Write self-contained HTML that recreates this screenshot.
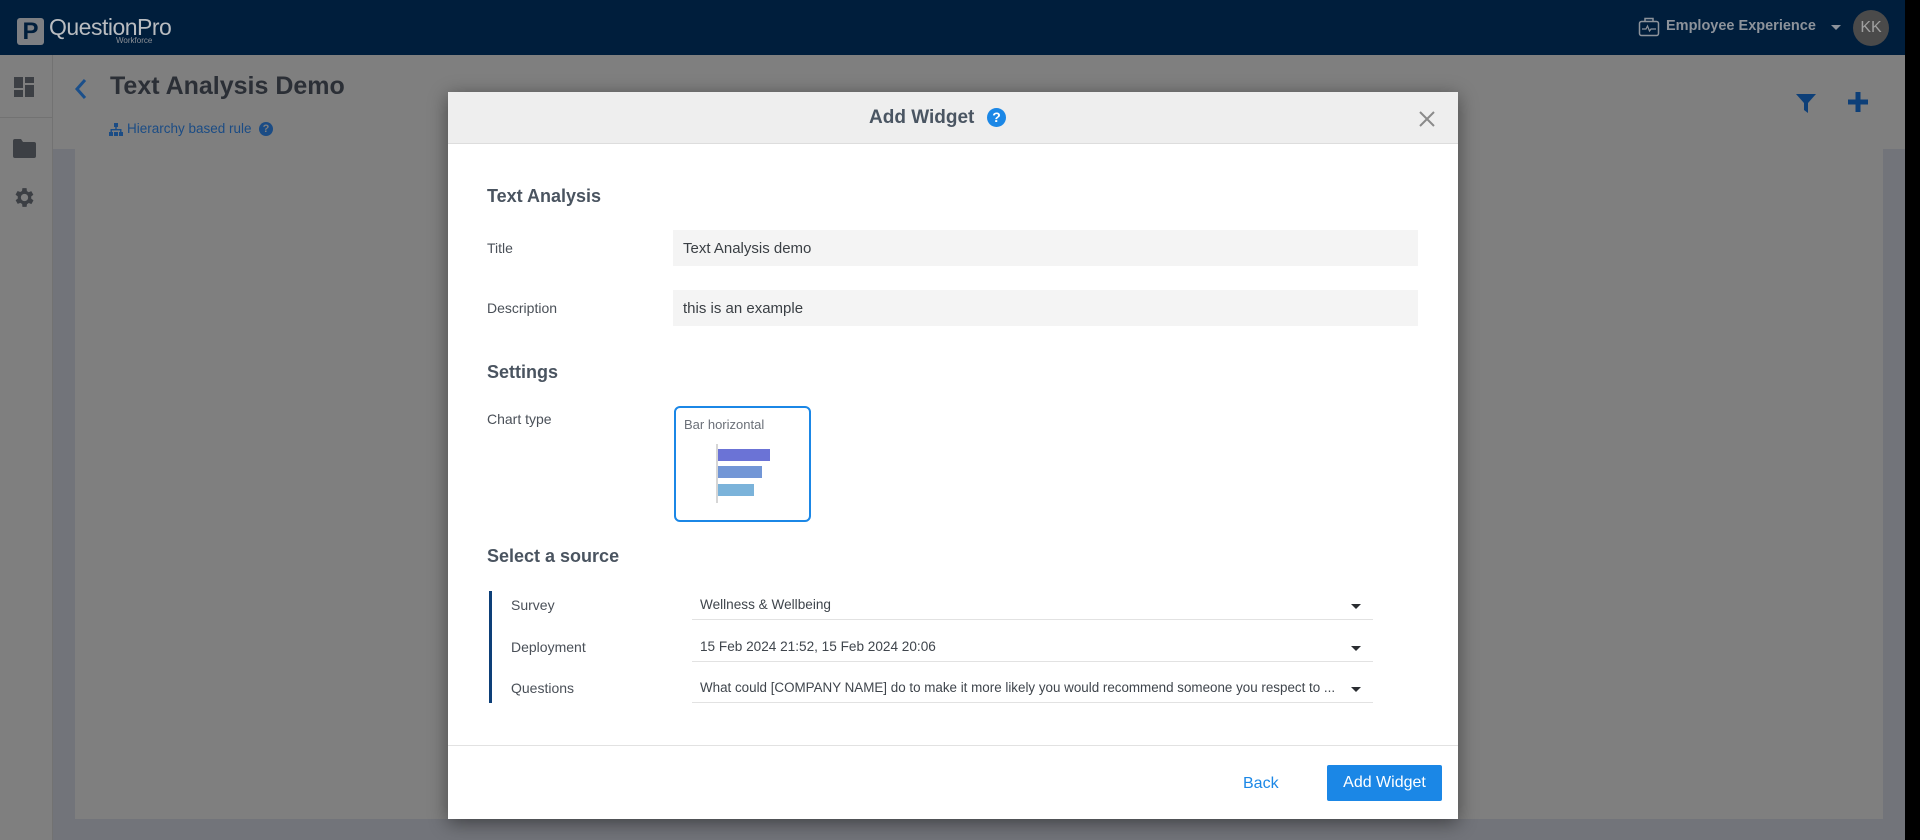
<!DOCTYPE html>
<html><head><meta charset="utf-8"><style>
*{box-sizing:border-box;margin:0;padding:0}
body{width:1920px;height:840px;overflow:hidden;background:#000;font-family:"Liberation Sans",sans-serif;position:relative}
.abs{position:absolute}
</style></head><body>
<div class="abs" style="left:0;top:0;width:1905px;height:840px;background:#7f7f7f"></div>
<!-- header -->
<div class="abs" style="left:0;top:0;width:1905px;height:55px;background:#001e3c"></div>
<div class="abs" style="left:17px;top:18px;width:27px;height:27px;background:#7d7f83;border-radius:3px;color:#001e3c;font-weight:bold;font-size:24px;line-height:27px;text-align:center">P</div>
<div class="abs" style="left:49px;top:14px;font-size:23px;color:#b9bcc0;letter-spacing:-0.5px">QuestionPro</div>
<div class="abs" style="left:116px;top:36px;font-size:8px;color:#8c9096">Workforce</div>
<svg class="abs" style="left:1638px;top:16px" width="22" height="22" viewBox="0 0 22 22"><rect x="1.5" y="5.5" width="19" height="14" rx="2" fill="none" stroke="#8d939b" stroke-width="1.5"/><path d="M7 5.5V2.5h8v3" fill="none" stroke="#8d939b" stroke-width="1.5"/><path d="M4 13h4l1.5-3 2 5 1.5-2h5" fill="none" stroke="#8d939b" stroke-width="1.2"/></svg>
<div class="abs" style="left:1666px;top:18px;font-size:14.5px;font-weight:bold;color:#8d939b">Employee Experience</div>
<div class="abs" style="left:1831px;top:25px;border-left:5px solid transparent;border-right:5px solid transparent;border-top:5px solid #8d939b"></div>
<div class="abs" style="left:1853px;top:10px;width:36px;height:36px;border-radius:50%;background:#4a4a4a;color:#a0a0a0;font-size:16px;line-height:36px;text-align:center">KK</div>
<!-- sidebar -->
<div class="abs" style="left:52px;top:55px;width:1px;height:785px;background:#727272"></div>
<div class="abs" style="left:0;top:117px;width:52px;height:1px;background:#727272"></div>
<svg class="abs" style="left:14px;top:77px" width="21" height="21" viewBox="0 0 21 21" fill="#3c3f44"><rect x="0" y="0" width="9" height="11"/><rect x="11" y="0" width="9" height="6"/><rect x="0" y="13" width="9" height="7"/><rect x="11" y="8" width="9" height="12"/></svg>
<svg class="abs" style="left:13px;top:139px" width="23" height="19" viewBox="0 0 23 19" fill="#3c3f44"><path d="M0 2a2 2 0 0 1 2-2h6l2 3h11a2 2 0 0 1 2 2v12a2 2 0 0 1-2 2H2a2 2 0 0 1-2-2z"/></svg>
<svg class="abs" style="left:12px;top:185px" width="25" height="25" viewBox="0 0 24 24" fill="#3c3f44"><path d="M19.4 13a7.5 7.5 0 0 0 0-2l2.1-1.6-2-3.5-2.5 1a7 7 0 0 0-1.7-1L15 3h-4l-.4 2.7a7 7 0 0 0-1.7 1l-2.5-1-2 3.5L6.6 11a7.5 7.5 0 0 0 0 2l-2.1 1.6 2 3.5 2.5-1a7 7 0 0 0 1.7 1L11 21h4l.4-2.7a7 7 0 0 0 1.7-1l2.5 1 2-3.5zM13 15.5a3.5 3.5 0 1 1 0-7 3.5 3.5 0 0 1 0 7z" transform="translate(-1 0)"/></svg>
<!-- main -->
<div class="abs" style="left:53px;top:149px;width:1852px;height:691px;background:#72747a"></div>
<div class="abs" style="left:75px;top:149px;width:1808px;height:670px;background:#7f7f7f"></div>
<svg class="abs" style="left:74px;top:78px" width="14" height="22" viewBox="0 0 14 22"><path d="M11 2L3 11l8 9" fill="none" stroke="#1b4f8a" stroke-width="3"/></svg>
<div class="abs" style="left:110px;top:72px;font-size:25px;font-weight:bold;color:#2b2f36">Text Analysis Demo</div>
<svg class="abs" style="left:109px;top:123px" width="14" height="13" viewBox="0 0 14 13" fill="#1b4c85"><rect x="5" y="0" width="4" height="4"/><rect x="6.3" y="4" width="1.4" height="3"/><rect x="1.5" y="6" width="11" height="1.4"/><rect x="1.5" y="6" width="1.4" height="3"/><rect x="11.1" y="6" width="1.4" height="3"/><rect x="0" y="9" width="4" height="4"/><rect x="5" y="9" width="4" height="4"/><rect x="10" y="9" width="4" height="4"/></svg>
<div class="abs" style="left:127px;top:121px;font-size:13.5px;color:#1b4c85">Hierarchy based rule</div>
<div class="abs" style="left:259px;top:122px;width:14px;height:14px;border-radius:50%;background:#1b4c85;color:#7f7f7f;font-size:11px;font-weight:bold;text-align:center;line-height:14px">?</div>
<svg class="abs" style="left:1796px;top:93px" width="20" height="20" viewBox="0 0 20 20"><path d="M0 1h20l-8 9v10l-4-3V10z" fill="#0d3f78"/></svg>
<svg class="abs" style="left:1848px;top:92px" width="20" height="20" viewBox="0 0 20 20"><path d="M7.5 0h5v7.5H20v5h-7.5V20h-5v-7.5H0v-5h7.5z" fill="#0d3f78"/></svg>
<!-- modal -->
<div class="abs" style="left:448px;top:92px;width:1010px;height:727px;background:#fff;box-shadow:0 4px 18px rgba(0,0,0,0.45)">
 <div class="abs" style="left:0;top:0;width:1010px;height:52px;background:#eeeeee;border-bottom:1px solid #dddddd"></div>
 <div class="abs" style="left:421px;top:15px;font-size:19px;font-weight:bold;color:#4a5562">Add Widget</div>
 <div class="abs" style="left:539px;top:16px;width:19px;height:19px;border-radius:50%;background:#1b87e6;color:#fff;font-size:14px;font-weight:bold;text-align:center;line-height:19px">?</div>
 <svg class="abs" style="left:971px;top:19px" width="16" height="16" viewBox="0 0 16 16"><path d="M1 1l14 14M15 1L1 15" stroke="#8a8a8a" stroke-width="2"/></svg>
 <div class="abs" style="left:39px;top:94px;font-size:18px;font-weight:bold;color:#4a5460">Text Analysis</div>
 <div class="abs" style="left:39px;top:148px;font-size:14px;color:#4a5058">Title</div>
 <div class="abs" style="left:225px;top:138px;width:745px;height:36px;background:#f4f4f4;font-size:15px;color:#3a3f44;padding:10px 10px">Text Analysis demo</div>
 <div class="abs" style="left:39px;top:208px;font-size:14px;color:#4a5058">Description</div>
 <div class="abs" style="left:225px;top:198px;width:745px;height:36px;background:#f4f4f4;font-size:15px;color:#3a3f44;padding:10px 10px">this is an example</div>
 <div class="abs" style="left:39px;top:270px;font-size:18px;font-weight:bold;color:#4a5460">Settings</div>
 <div class="abs" style="left:39px;top:319px;font-size:14px;color:#4a5058">Chart type</div>
 <div class="abs" style="left:226px;top:314px;width:137px;height:116px;border:2px solid #1b87e6;border-radius:6px">
  <div class="abs" style="left:8px;top:9px;font-size:13px;color:#6b7078">Bar horizontal</div>
  <div class="abs" style="left:40px;top:36px;width:2px;height:59px;background:#d6d6d6"></div>
  <div class="abs" style="left:42px;top:41px;width:52px;height:12px;background:#6b73d6"></div>
  <div class="abs" style="left:42px;top:58px;width:44px;height:12px;background:#7296d6"></div>
  <div class="abs" style="left:42px;top:76px;width:36px;height:12px;background:#7bb3da"></div>
 </div>
 <div class="abs" style="left:39px;top:454px;font-size:18px;font-weight:bold;color:#4a5460">Select a source</div>
 <div class="abs" style="left:41px;top:499px;width:3px;height:112px;background:#0d3f78"></div>
 <div class="abs" style="left:63px;top:505px;font-size:14px;color:#4a5058">Survey</div>
 <div class="abs" style="left:63px;top:547px;font-size:14px;color:#4a5058">Deployment</div>
 <div class="abs" style="left:63px;top:588px;font-size:14px;color:#4a5058">Questions</div>
 <div class="abs" style="left:252px;top:505px;font-size:13.6px;color:#3f454c">Wellness &amp; Wellbeing</div>
 <div class="abs" style="left:252px;top:547px;font-size:13.6px;color:#3f454c">15 Feb 2024 21:52, 15 Feb 2024 20:06</div>
 <div class="abs" style="left:252px;top:588px;font-size:13.4px;color:#3f454c;white-space:nowrap">What could [COMPANY NAME] do to make it more likely you would recommend someone you respect to ...</div>
 <div class="abs" style="left:244px;top:527px;width:681px;height:1px;background:#e2e2e2"></div>
 <div class="abs" style="left:244px;top:569px;width:681px;height:1px;background:#e2e2e2"></div>
 <div class="abs" style="left:244px;top:610px;width:681px;height:1px;background:#e2e2e2"></div>
 <div class="abs" style="left:903px;top:512px;border-left:5px solid transparent;border-right:5px solid transparent;border-top:5px solid #2a2d31"></div>
 <div class="abs" style="left:903px;top:554px;border-left:5px solid transparent;border-right:5px solid transparent;border-top:5px solid #2a2d31"></div>
 <div class="abs" style="left:903px;top:595px;border-left:5px solid transparent;border-right:5px solid transparent;border-top:5px solid #2a2d31"></div>
 <div class="abs" style="left:0;top:653px;width:1010px;height:1px;background:#e2e2e2"></div>
 <div class="abs" style="left:795px;top:683px;font-size:16px;color:#1b87e6">Back</div>
 <div class="abs" style="left:879px;top:673px;width:115px;height:36px;background:#1b87e6;border-radius:2px;color:#fff;font-size:16px;text-align:center;line-height:36px">Add Widget</div>
</div>
</body></html>
